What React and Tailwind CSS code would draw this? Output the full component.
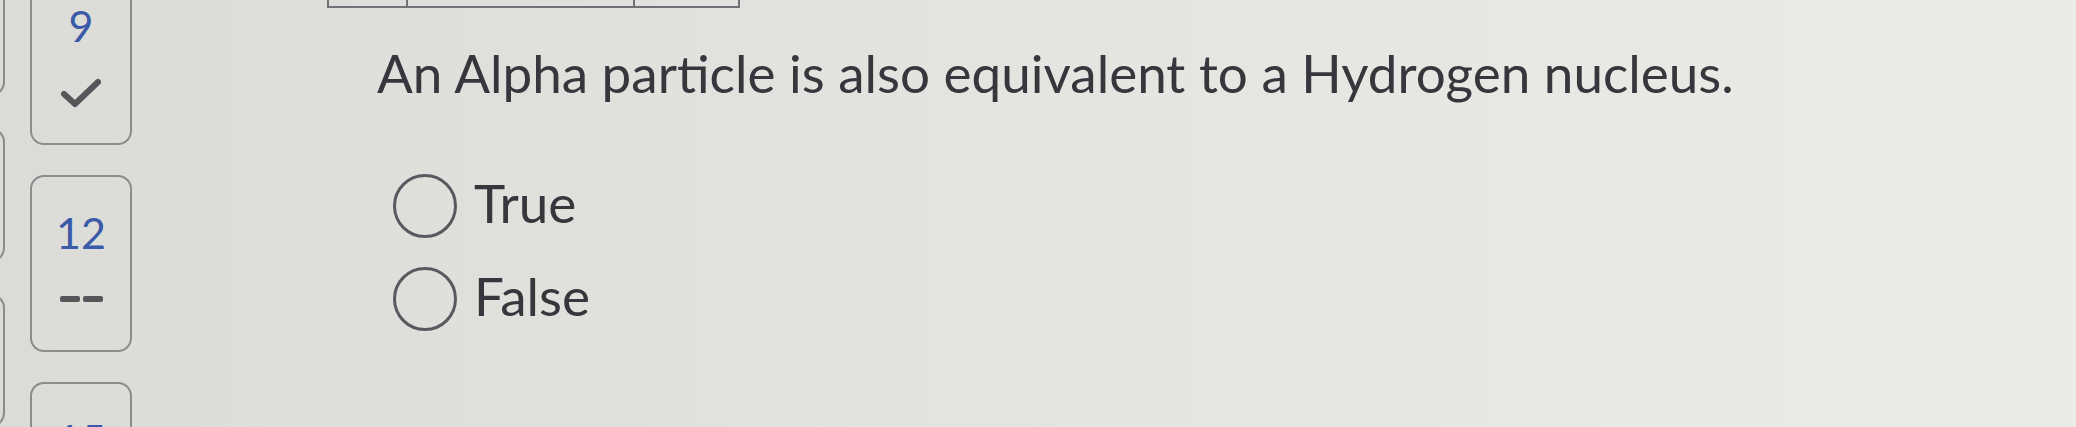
import { useState } from "react";

const navCards = [
  { label: "9", done: true },
  { label: "12", done: false },
  { label: "15", done: false },
];

function CheckIcon() {
  return (
    <svg width="40" height="30" viewBox="0 0 40 30" fill="none">
      <polyline
        points="3,16 14,26 37,4"
        stroke="#56565a"
        strokeWidth="6"
        strokeLinecap="round"
        strokeLinejoin="round"
      />
    </svg>
  );
}

function NavCard({ card }) {
  return (
    <div className="w-[102px] h-[177px] shrink-0 rounded-[14px] border-2 border-[#8c8c8e] flex flex-col items-center pt-[34px]">
      <span className="text-[43px] leading-none text-[#3b5aa8]">{card.label}</span>
      {card.done ? (
        <div className="mt-[31px]">
          <CheckIcon />
        </div>
      ) : (
        <div className="mt-[42px] flex gap-[3px]">
          <span className="w-[20px] h-[6px] rounded-[2px] bg-[#56565a]" />
          <span className="w-[20px] h-[6px] rounded-[2px] bg-[#56565a]" />
        </div>
      )}
    </div>
  );
}

function Radio({ label, checked, onSelect }) {
  return (
    <button className="flex items-center gap-[17px] text-left" onClick={onSelect}>
      <span className="w-[64px] h-[64px] rounded-full border-[3px] border-[#5a585e] flex items-center justify-center">
        {checked && <span className="w-[30px] h-[30px] rounded-full bg-[#5a585e]" />}
      </span>
      <span className="text-[53px] leading-none text-[#38363c] mb-[8px]">{label}</span>
    </button>
  );
}

export default function App() {
  const [ answer, setAnswer ] = useState(null);

  return (
    <div
      className="w-[2076px] h-[427px] overflow-hidden flex bg-gradient-to-r from-[#dbdbd7] via-[#e4e4e0] to-[#ebebe7]"
      style={{ fontFamily: "Lato, 'Noto Sans', sans-serif" }}
    >
      {/* previous column of question cards, mostly off screen */}
      <div className="flex flex-col gap-[32px] -ml-[97px] -mt-[37px]">
        {navCards.map((card, index) => (
          <div key={index} className="w-[102px] h-[177px] rounded-[14px] border-2 border-[#8c8c8e]" />
        ))}
      </div>

      {/* question navigator */}
      <div className="flex flex-col gap-[30px] ml-[25px] -mt-[32px]">
        {navCards.map((card, index) => (
          <NavCard key={index} card={card} />
        ))}
      </div>

      {/* question body */}
      <div className="flex flex-col ml-[195px]">
        <div className="w-[413px] h-[8px] border-x-2 border-b-2 border-[#727276] grid grid-cols-[79px_227px_1fr]">
          <div className="border-r-2 border-[#727276]" />
          <div className="border-r-2 border-[#727276]" />
          <div />
        </div>

        <div className="ml-[50px] mt-[38px]">
          <p className="text-[53px] leading-none text-[#38363c] whitespace-nowrap">
            An Alpha particle is also equivalent to a Hydrogen nucleus.
          </p>

          <div className="flex flex-col gap-[29px] mt-[75px] ml-[16px]">
            <Radio label="True" checked={answer === "true"} onSelect={() => setAnswer("true")} />
            <Radio label="False" checked={answer === "false"} onSelect={() => setAnswer("false")} />
          </div>
        </div>
      </div>
    </div>
  );
}
